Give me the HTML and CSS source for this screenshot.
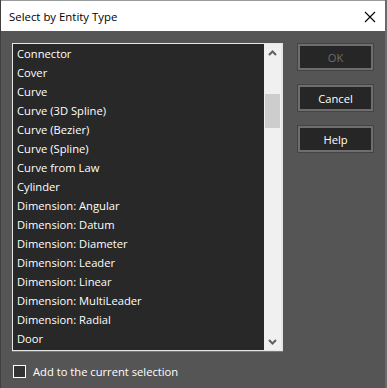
FILE: index.html
```html
<!DOCTYPE html>
<html>
<head>
<meta charset="utf-8">
<link rel="stylesheet" href="styles.css">
</head>
<body>
<div class="window">
  <div class="titlebar">
    <span class="title">Select by Entity Type</span>
    <svg class="close" width="12" height="12" viewBox="0 0 12 12"><path d="M1 1 L11 11 M11 1 L1 11" stroke="#000" stroke-width="1.1" fill="none"/></svg>
  </div>
  <div class="body">
    <div class="main">
      <div class="list">
        <ul class="items">
          <li>Connector</li>
          <li>Cover</li>
          <li>Curve</li>
          <li>Curve (3D Spline)</li>
          <li>Curve (Bezier)</li>
          <li>Curve (Spline)</li>
          <li>Curve from Law</li>
          <li>Cylinder</li>
          <li>Dimension: Angular</li>
          <li>Dimension: Datum</li>
          <li>Dimension: Diameter</li>
          <li>Dimension: Leader</li>
          <li>Dimension: Linear</li>
          <li>Dimension: MultiLeader</li>
          <li>Dimension: Radial</li>
          <li>Door</li>
        </ul>
        <div class="scrollbar">
          <div class="arrow"><svg width="9" height="6" viewBox="0 0 9 6"><path d="M1 5 L4.5 1.5 L8 5" stroke="#606060" stroke-width="2" fill="none"/></svg></div>
          <div class="track"><div class="thumb"></div></div>
          <div class="arrow"><svg width="9" height="6" viewBox="0 0 9 6"><path d="M1 1 L4.5 4.5 L8 1" stroke="#606060" stroke-width="2" fill="none"/></svg></div>
        </div>
      </div>
      <div class="buttons">
        <button class="btn disabled">OK</button>
        <button class="btn">Cancel</button>
        <button class="btn">Help</button>
      </div>
    </div>
    <label class="check"><span class="box"></span><span class="label">Add to the current selection</span></label>
  </div>
</div>
</body>
</html>
```

FILE: styles.css
```css
html, body {
  margin: 0;
  padding: 0;
  background: #555555;
}
.window {
  width: 387px;
  height: 388px;
  box-sizing: border-box;
  border-left: 1px solid #3f3f3f;
  border-right: 2px solid #6a6a6a;
  display: flex;
  flex-direction: column;
  font-family: "Open Sans", "Noto Sans", sans-serif;
  font-size: 11.2px;
  background: #555555;
}
.titlebar {
  height: 31px;
  flex: none;
  background: #ffffff;
  display: flex;
  align-items: center;
  justify-content: space-between;
  padding: 0 9px 0 8px;
  box-sizing: border-box;
  border-top: 1px solid #9a9a9a;
}
.title {
  color: #000;
  font-size: 11.4px;
}
.close {
  display: block;
  margin-top: 1px;
}
.body {
  flex: 1;
  padding: 12px 0 0 11px;
  display: flex;
  flex-direction: column;
}
.main {
  display: flex;
  gap: 15px;
}
.list {
  width: 271px;
  height: 308px;
  box-sizing: border-box;
  border: 1px solid #e6e6e6;
  box-shadow: 0 1px 0 0 #7a7a7a;
  background: #282828;
  display: flex;
}
.items {
  list-style: none;
  margin: 0;
  padding: 0 0 0 4px;
  flex: 1;
  overflow: hidden;
}
.items li {
  height: 19px;
  line-height: 19px;
  color: #ffffff;
  white-space: nowrap;
}
.scrollbar {
  width: 17px;
  background: #f0f0f0;
  display: flex;
  flex-direction: column;
  border-right: 1px solid #e6e6e6;
}
.arrow {
  height: 17px;
  display: flex;
  align-items: center;
  justify-content: center;
  flex: none;
}
.track {
  flex: 1;
  padding-top: 33px;
}
.thumb {
  margin: 0 1px;
  height: 34px;
  background: #cdcdcd;
}
.buttons {
  display: flex;
  flex-direction: column;
  gap: 15px;
  padding-top: 1px;
}
.btn {
  width: 75px;
  height: 26px;
  box-sizing: border-box;
  border: 2px solid #6e6e6e;
  background: #262626;
  color: #ffffff;
  font-family: "Open Sans", "Noto Sans", sans-serif;
  font-size: 11.2px;
  padding: 0;
  margin: 0;
  outline: 1px solid #444;
}
.btn.disabled {
  color: #6d6d6d;
}
.check {
  display: flex;
  align-items: center;
  margin-top: 13px;
  margin-left: 1px;
  color: #ffffff;
}
.box {
  width: 13px;
  height: 13px;
  box-sizing: border-box;
  border: 1px solid #ffffff;
  background: #333333;
  flex: none;
}
.label {
  margin-left: 7px;
}
```
